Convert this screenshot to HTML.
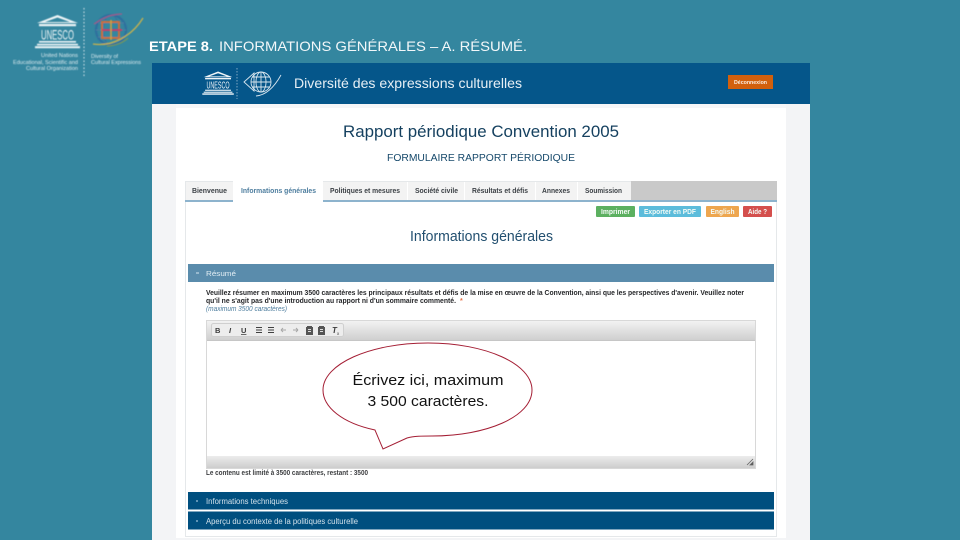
<!DOCTYPE html>
<html><head><meta charset="utf-8"><style>
html,body{margin:0;padding:0;width:960px;height:540px;overflow:hidden;background:#34869f}
svg{display:block}
text{font-family:"Liberation Sans",sans-serif}
</style></head><body>
<svg width="960" height="540" viewBox="0 0 960 540" xmlns="http://www.w3.org/2000/svg">
<defs>
<linearGradient id="tb" x1="0" y1="0" x2="0" y2="1"><stop offset="0" stop-color="#f2f2f2"/><stop offset="1" stop-color="#cfcfcf"/></linearGradient>
<linearGradient id="bb" x1="0" y1="0" x2="0" y2="1"><stop offset="0" stop-color="#ececec"/><stop offset="1" stop-color="#cdcdcd"/></linearGradient>
<filter id="s" x="-2%" y="-2%" width="104%" height="104%"><feGaussianBlur stdDeviation="0.35"/></filter>
<filter id="s2" x="-5%" y="-5%" width="110%" height="110%"><feGaussianBlur stdDeviation="0.5"/></filter>
</defs>
<rect width="960" height="540" fill="#34869f"/>

<!-- top left logo -->
<g filter="url(#s2)">
<g transform="translate(36,15)" fill="#eef5f7">
<path fill-rule="evenodd" d="M21.500 0 L42 8 H1 Z M21.500 2.500 L9 7 H34 Z"/>
<rect x="3" y="9" width="37" height="2.200"/>
<text x="5" y="24.500" font-size="14" textLength="33" lengthAdjust="spacingAndGlyphs">UNESCO</text>
<rect x="3" y="26" width="37" height="1.600"/>
<rect x="1" y="28.800" width="41" height="1.600"/>
<rect x="-1" y="31.200" width="45" height="2"/>
</g>
<path d="M84 8V76" stroke="#d6e6eb" stroke-width="1" stroke-dasharray="1.500 2"/>
<g fill="none">
<circle cx="111" cy="30" r="15" stroke="#2d6f9e" stroke-width="2.200"/>
<ellipse cx="111" cy="30" rx="8" ry="15" stroke="#3a6f9a" stroke-width="1"/>
<path d="M96 30H126M98 23H124M98 37H124" stroke="#4f7da0" stroke-width="1"/>
<path d="M102 22H119V38H102Z" stroke="#c9703a" stroke-width="2"/>
<path d="M102 30H122" stroke="#c2406a" stroke-width="2"/>
<path d="M111 20V40" stroke="#d2a23c" stroke-width="1.500"/>
<path d="M93 44C112 47 132 36 143 18" stroke="#c9b24c" stroke-width="1.300"/>
<path d="M94 24C104 17 114 14 122 14" stroke="#a05a8a" stroke-width="1.300"/>
<path d="M107 46C116 46 124 42 128 38" stroke="#7a9a55" stroke-width="1.200"/>
</g>
<g fill="#dcebef" font-size="5.500">
<text x="78" y="57" text-anchor="end" textLength="37" lengthAdjust="spacingAndGlyphs">United Nations</text>
<text x="78" y="64" text-anchor="end" textLength="65" lengthAdjust="spacingAndGlyphs">Educational, Scientific and</text>
<text x="78" y="70" text-anchor="end" textLength="52" lengthAdjust="spacingAndGlyphs">Cultural Organization</text>
<text x="91" y="58" textLength="27" lengthAdjust="spacingAndGlyphs">Diversity of</text>
<text x="91" y="64" textLength="50" lengthAdjust="spacingAndGlyphs">Cultural Expressions</text>
</g>
</g>

<!-- slide title -->
<text x="149" y="51" font-size="14" font-weight="700" fill="#fff" textLength="64" lengthAdjust="spacingAndGlyphs">ETAPE 8.</text>
<text x="219" y="51" font-size="14" fill="#f2f7f9" textLength="308" lengthAdjust="spacingAndGlyphs">INFORMATIONS GÉNÉRALES – A. RÉSUMÉ.</text>

<!-- screenshot -->
<rect x="152" y="63" width="658" height="477" fill="#f3f4f6"/>
<rect x="152" y="63" width="658" height="41" fill="#05568a"/>
<rect x="176" y="108" width="610" height="430" fill="#fff"/>
<rect x="176" y="104" width="610" height="4" fill="#f5f6f8"/>

<g filter="url(#s)">
<g transform="translate(203,71.500) scale(0.700)" fill="#eef4f8">
<path fill-rule="evenodd" d="M21.500 0 L42 8 H1 Z M21.500 2.500 L9 7 H34 Z"/>
<rect x="3" y="9" width="37" height="2.200"/>
<text x="5" y="24.500" font-size="14" textLength="33" lengthAdjust="spacingAndGlyphs">UNESCO</text>
<rect x="3" y="26" width="37" height="1.600"/>
<rect x="1" y="28.800" width="41" height="1.600"/>
<rect x="-1" y="31.200" width="45" height="2"/>
</g>
<path d="M237 68V99" stroke="#7ea6c2" stroke-width="1" stroke-dasharray="1.500 1.500"/>
<g fill="none" stroke="#d7e5ee" stroke-width="0.900">
<circle cx="261" cy="82" r="10"/><ellipse cx="261" cy="82" rx="5" ry="10"/>
<path d="M251 82H271M252 77H270M252 87H270M261 72V92"/>
<path d="M244 82L254 73L254 91Z"/>
<path d="M256 96C268 95 276 84 281 75"/>
</g>
<text x="294" y="88" font-size="14" fill="#e6eff5" textLength="228" lengthAdjust="spacingAndGlyphs">Diversité des expressions culturelles</text>
<rect x="728" y="75" width="45" height="14" fill="#d2610f"/>
<text x="750.500" y="84" font-size="5.500" font-weight="700" fill="#fbeee0" text-anchor="middle" textLength="33" lengthAdjust="spacingAndGlyphs">Déconnexion</text>

<text x="343" y="137" font-size="16.500" fill="#123f5e" textLength="276" lengthAdjust="spacingAndGlyphs">Rapport périodique Convention 2005</text>
<text x="387" y="161" font-size="10" fill="#15486b" textLength="188" lengthAdjust="spacingAndGlyphs">FORMULAIRE RAPPORT PÉRIODIQUE</text>

<!-- panel -->
<rect x="185.500" y="181.500" width="591" height="355" fill="#fff" stroke="#e5e8ea"/>
<rect x="631" y="181" width="146" height="20" fill="#c9c9c9"/>
<rect x="185" y="200" width="592" height="2" fill="#8db3cd"/>
<rect x="186" y="182" width="47" height="18" fill="#f3f3f3"/>
<rect x="233" y="181" width="90" height="21" fill="#fff"/>
<rect x="323" y="182" width="84" height="18" fill="#f3f3f3"/>
<rect x="408" y="182" width="56" height="18" fill="#f3f3f3"/>
<rect x="465" y="182" width="70" height="18" fill="#f3f3f3"/>
<rect x="536" y="182" width="41" height="18" fill="#f3f3f3"/>
<rect x="578" y="182" width="53" height="18" fill="#f3f3f3"/>
<g font-size="7" fill="#3a3f44" font-weight="700">
<text x="192" y="193" textLength="35" lengthAdjust="spacingAndGlyphs">Bienvenue</text>
<text x="241" y="193" textLength="75" lengthAdjust="spacingAndGlyphs" fill="#4d7d9e">Informations générales</text>
<text x="330" y="193" textLength="70" lengthAdjust="spacingAndGlyphs">Politiques et mesures</text>
<text x="415" y="193" textLength="43" lengthAdjust="spacingAndGlyphs">Société civile</text>
<text x="472" y="193" textLength="56" lengthAdjust="spacingAndGlyphs">Résultats et défis</text>
<text x="542" y="193" textLength="28" lengthAdjust="spacingAndGlyphs">Annexes</text>
<text x="585" y="193" textLength="37" lengthAdjust="spacingAndGlyphs">Soumission</text>
</g>

<!-- buttons -->
<rect x="596" y="206" width="39" height="11" rx="1" fill="#5cb060"/>
<rect x="639" y="206" width="62" height="11" rx="1" fill="#5bbcdb"/>
<rect x="706" y="206" width="33" height="11" rx="1" fill="#eea64f"/>
<rect x="743" y="206" width="29" height="11" rx="1" fill="#d4504e"/>
<g font-size="7" font-weight="700" fill="#f4fbf6" text-anchor="middle">
<text x="615.500" y="214" textLength="29" lengthAdjust="spacingAndGlyphs">Imprimer</text>
<text x="670" y="214" textLength="52" lengthAdjust="spacingAndGlyphs">Exporter en PDF</text>
<text x="722.500" y="214" textLength="24" lengthAdjust="spacingAndGlyphs">English</text>
<text x="757.500" y="214" textLength="19" lengthAdjust="spacingAndGlyphs">Aide ?</text>
</g>

<text x="410" y="241" font-size="15" fill="#23506f" textLength="143" lengthAdjust="spacingAndGlyphs">Informations générales</text>

<!-- resume bar -->
<rect x="188" y="264" width="586" height="18" fill="#5a8cac"/>
<rect x="196" y="272.500" width="3" height="1" fill="#d7e6ef"/>
<text x="206" y="276" font-size="7.500" fill="#e3eef4" textLength="30" lengthAdjust="spacingAndGlyphs">Résumé</text>

<g font-size="7" font-weight="700" fill="#26282a">
<text x="206" y="295" textLength="538" lengthAdjust="spacingAndGlyphs">Veuillez résumer en maximum 3500 caractères les principaux résultats et défis de la mise en œuvre de la Convention, ainsi que les perspectives d'avenir. Veuillez noter</text>
<text x="206" y="303" textLength="250" lengthAdjust="spacingAndGlyphs">qu'il ne s'agit pas d'une introduction au rapport ni d'un sommaire commenté.</text>
</g>
<text x="460" y="303" font-size="7" font-weight="700" fill="#e8734a">*</text>
<text x="206" y="311" font-size="7" font-style="italic" fill="#4d7d9e" textLength="81" lengthAdjust="spacingAndGlyphs">(maximum 3500 caractères)</text>

<!-- editor -->
<rect x="206.500" y="320.500" width="549" height="148" fill="#fff" stroke="#d8d8d8"/>
<rect x="207" y="321" width="548" height="19" fill="url(#tb)"/>
<rect x="207" y="340" width="548" height="1" fill="#c6c6c6"/>
<rect x="207" y="456" width="548" height="12" fill="url(#bb)"/>
<path d="M750 465L753 462V465Z M747 465L753 459" fill="#555" stroke="#666" stroke-width="0.800"/>
<rect x="211.500" y="323.500" width="132" height="13" rx="2" fill="#ededed" stroke="#cfcfcf"/>
<g fill="#3b3b3b" font-size="7.500">
<text x="215" y="333" font-weight="700">B</text>
<text x="229" y="333" font-style="italic" font-weight="700" font-family="Liberation Serif">I</text>
<text x="241" y="333" font-weight="700" text-decoration="underline">U</text>
</g>
<g stroke="#3f3f3f" stroke-width="1" fill="none">
<path d="M256 327.500H262M256 330H262M256 332.500H262"/>
<path d="M268 327.500H274M268 330H274M268 332.500H274"/>
<path d="M281 330H286M281 330L283 328M281 330L283 332" stroke="#a8a8a8"/>
<path d="M293 330H298M298 330L296 328M298 330L296 332" stroke="#a8a8a8"/>
</g>
<path d="M307 326h5v1h1v8h-7v-8h1z M319 326h5v1h1v8h-7v-8h1z" fill="#555"/>
<path d="M308 329h3v1h-3z M308 331h3v1h-3z M320 329h3v1h-3z M320 331h3v1h-3z" fill="#ddd"/>
<text x="332" y="333" font-size="8" font-style="italic" font-weight="700" fill="#3b3b3b" font-family="Liberation Serif">T</text>
<text x="337" y="335" font-size="4.500" fill="#3b3b3b">x</text>

<text x="206" y="475" font-size="7" font-weight="700" fill="#3c3e40" textLength="162" lengthAdjust="spacingAndGlyphs">Le contenu est limité à 3500 caractères, restant : 3500</text>

<!-- blue bars -->
<rect x="188" y="492" width="586" height="17.500" fill="#05507f"/>
<rect x="188" y="511.500" width="586" height="18" fill="#05507f"/>
<rect x="196" y="500" width="2" height="2" fill="#5f94b5"/>
<rect x="196" y="520" width="2" height="2" fill="#5f94b5"/>
<text x="206" y="504" font-size="8" fill="#cfe0ea" textLength="82" lengthAdjust="spacingAndGlyphs">Informations techniques</text>
<text x="206" y="524" font-size="8" fill="#cfe0ea" textLength="152" lengthAdjust="spacingAndGlyphs">Aperçu du contexte de la politiques culturelle</text>
</g>

<!-- callout -->
<path d="M375 430 C342 423 323 407 323 390 C323 364 370 343 428 343 C486 343 532 364 532 390 C532 417 486 436 432 436 C422 436 414 436 407 438 L383 449 Z" fill="#fff" stroke="#a41e34" stroke-width="1"/>
<text x="428" y="385" font-size="15" fill="#111" text-anchor="middle" textLength="151" lengthAdjust="spacingAndGlyphs">Écrivez ici, maximum</text>
<text x="428" y="406" font-size="15" fill="#111" text-anchor="middle" textLength="121" lengthAdjust="spacingAndGlyphs">3 500 caractères.</text>
</svg>
</body></html>
